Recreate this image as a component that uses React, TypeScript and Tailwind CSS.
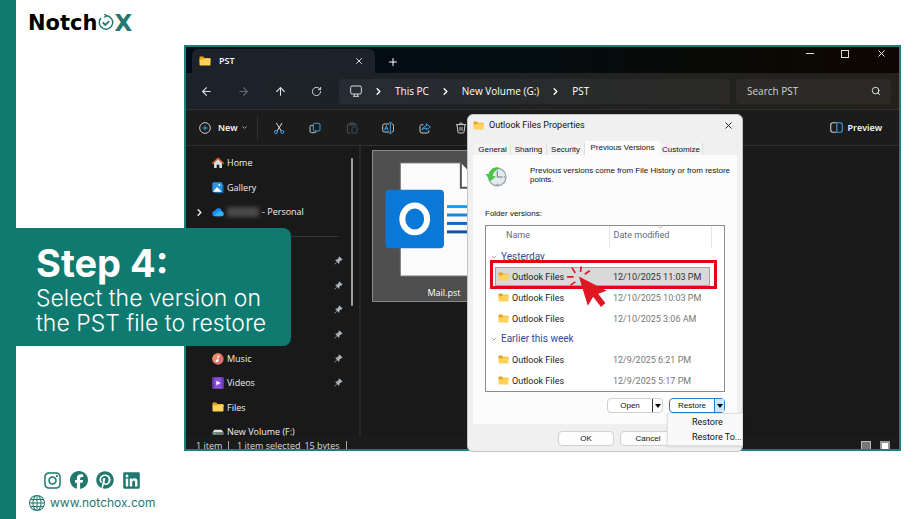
import type { ReactNode } from "react";
import { ArrowLeft, ArrowRight, ArrowUp, ChevronDown, ChevronRight, Plus, RotateCw, Search, X } from "lucide-react";
import { FaFacebook, FaInstagram, FaLinkedin, FaPinterest } from "react-icons/fa6";
import { BsGlobe } from "react-icons/bs";

function Folder({ className }: { className: string }) {
  return (
    <svg viewBox="0 0 24 20" className={className} aria-hidden="true">
      <path d="M1 2.5Q1 1 2.5 1H8.5L11 4H21.5Q23 4 23 5.5V10H1Z" fill="#e9a21b" />
      <path d="M1 7H9L11.5 5H21.5Q23 5 23 6.5V17.5Q23 19 21.5 19H2.5Q1 19 1 17.5Z" fill="#ffd25a" />
    </svg>
  );
}

function Pin() {
  return (
    <svg viewBox="0 0 20 20" className="size-[9px] shrink-0" aria-hidden="true">
      <path d="M12 1L19 8L17 10L15.500 9.500L12 13Q12.500 16 11 17.500L7 13.500L2 19L1 18L6.500 13L2.500 9Q4 7.500 7 8L10.500 4.500L10 3Z" fill="#aab4bb" />
    </svg>
  );
}

function Logo() {
  return (
    <div className="flex items-center font-['DejaVu_Sans'] text-[21px] leading-6 font-bold text-black">
      <span>Notch</span>
      <svg viewBox="0 0 44 48" className="ml-px h-[17px] w-4" fill="none" stroke="#23786f" strokeWidth="4" aria-hidden="true">
        <path d="M20 5A19 19 0 1 1 8 11" />
        <path d="M3 19L5 15M17 0L23 5L17 10" />
        <path d="M13 24L20 31L31 20" strokeWidth="5" />
      </svg>
      <span className="text-[23px] text-[#23786f]">X</span>
    </div>
  );
}

function Monitor() {
  return (
    <svg viewBox="0 0 36 36" className="size-3" fill="none" stroke="#d8d8d8" strokeWidth="3" aria-hidden="true">
      <rect x="2" y="3" width="32" height="24" rx="4" />
      <path d="M13 27V33M23 27V33M9 34H27" />
    </svg>
  );
}

const toolIcons: { name: string; drawing: ReactNode }[] = [
  {
    name: "Cut",
    drawing: (
      <>
        <path d="M10 3L25 27M27 3L12 27" stroke="#dcdcdc" />
        <circle cx="9" cy="30" r="4.500" stroke="#3ba4e6" />
        <circle cx="28" cy="30" r="4.500" stroke="#3ba4e6" />
      </>
    ),
  },
  {
    name: "Copy",
    drawing: (
      <>
        <path d="M12 10H7Q3 10 3 14V27Q3 32 8 32H17Q21 32 21 28" stroke="#c8c8c8" />
        <rect x="13" y="4" width="20" height="23" rx="4" stroke="#3ba4e6" />
      </>
    ),
  },
  {
    name: "Paste",
    drawing: (
      <>
        <path d="M13 33H8Q4 33 4 29V9Q4 6 8 6H12M24 6H27Q31 6 31 10V12M12 3H24V9H12Z" stroke="#555" />
        <rect x="18" y="15" width="15" height="18" rx="3" stroke="#28506a" />
      </>
    ),
  },
  {
    name: "Rename",
    drawing: (
      <>
        <path d="M21 6H7Q2 6 2 11V25Q2 30 7 30H21M29 6Q35 6 35 11V25Q35 30 29 30" stroke="#c8c8c8" />
        <path d="M8 25L13 11L18 25M10 20H16M25 3V33M21 2H29M21 34H29" stroke="#3ba4e6" />
      </>
    ),
  },
  {
    name: "Share",
    drawing: (
      <>
        <path d="M13 8H9Q3 8 3 14V27Q3 33 9 33H24Q30 33 30 27V25" stroke="#c8c8c8" />
        <path d="M9 24Q11 13 22 12V5L34 15L22 24V18Q14 18 9 24Z" stroke="#3ba4e6" />
      </>
    ),
  },
  {
    name: "Delete",
    drawing: <path d="M3 8H33M13 8Q13 3 18 3Q23 3 23 8M6 9L9 30Q9 33 13 33H23Q27 33 27 30L30 9M15 15V26M21 15V26" stroke="#d0d0d0" />,
  },
];

const sidebarIcons = {
  home: (
    <>
      <path d="M6 17L18 6L30 17V31Q30 33 28 33H22V23H14V33H8Q6 33 6 31Z" fill="#d9dde0" />
      <path d="M2 19L18 4L34 19" fill="none" stroke="#e8632b" strokeWidth="4" strokeLinejoin="round" strokeLinecap="round" />
    </>
  ),
  gallery: (
    <>
      <rect x="7" y="6" width="28" height="28" rx="4" fill="#0d5ba8" />
      <rect x="1" y="1" width="30" height="30" rx="4" fill="#2b93e0" />
      <path d="M3 29L15 15L29 29Z" fill="#fff" />
      <circle cx="22" cy="9" r="3" fill="#fff" />
    </>
  ),
  cloud: (
    <>
      <path d="M10 31Q1 31 1 23Q1 15 9 14Q13 5 22 7Q29 9 29 16Q35 18 35 24Q35 31 28 31Z" fill="#1a8cf0" />
      <path d="M10 31Q4 29 14 22Q22 15 29 16Q35 18 35 24Q35 31 28 31Z" fill="#35b4fb" />
    </>
  ),
  music: (
    <>
      <circle cx="18" cy="18" r="17" fill="#dc6f6b" />
      <path d="M1 18A17 17 0 0 1 30 6Q16 8 6 30Q1 25 1 18Z" fill="#ee8a62" />
      <circle cx="15" cy="23" r="4.500" fill="#fff" />
      <path d="M18 23V9L24 12" fill="none" stroke="#fff" strokeWidth="3" />
    </>
  ),
  videos: (
    <>
      <rect x="1" y="1" width="34" height="34" rx="3" fill="#8b4fe0" />
      <path d="M5 4V33M31 4V33" stroke="#3c1b78" strokeWidth="4" strokeDasharray="3 3" />
      <path d="M13 11L26 18L13 25Z" fill="#fff" />
    </>
  ),
  drive: (
    <>
      <path d="M7 11H29L35 20H1Z" fill="#dfe3e3" />
      <rect x="1" y="19" width="34" height="8" rx="2" fill="#6b7472" />
      <path d="M5 23H12" stroke="#3fd07a" strokeWidth="3" />
    </>
  ),
};

function SideIcon({ kind }: { kind: keyof typeof sidebarIcons }) {
  return (
    <svg viewBox="0 0 36 36" className="size-3 shrink-0" aria-hidden="true">
      {sidebarIcons[kind]}
    </svg>
  );
}

function SideRow({ icon, label, pinned }: { icon?: ReactNode; label?: string; pinned?: boolean }) {
  return (
    <li className="flex items-center gap-[3px] pr-2 pl-[26px]">
      {icon}
      <span className="flex-1">{label}</span>
      {pinned && <Pin />}
    </li>
  );
}

function Sidebar() {
  return (
    <nav aria-label="Folders" className="flex w-[175px] shrink-0 border-r-2 border-[#272727]">
      <ul className="mt-[5px] grid h-[293px] flex-1 grid-rows-12 text-[9px] text-[#f0f0f0]">
        <SideRow icon={<SideIcon kind="home" />} label="Home" />
        <SideRow icon={<SideIcon kind="gallery" />} label="Gallery" />
        <li className="flex items-center gap-[3px] pl-2">
          <ChevronRight className="mr-1 size-[11px]" strokeWidth={3} />
          <SideIcon kind="cloud" />
          <span className="h-[10px] w-8 bg-[#4a4a4a] blur-[2px]" />
          <span>- Personal</span>
        </li>
        <li className="flex items-center pr-3 pl-2">
          <span className="h-px flex-1 bg-[#333]" />
        </li>
        <SideRow pinned />
        <SideRow pinned />
        <SideRow pinned />
        <SideRow pinned />
        <SideRow icon={<SideIcon kind="music" />} label="Music" pinned />
        <SideRow icon={<SideIcon kind="videos" />} label="Videos" pinned />
        <SideRow icon={<Folder className="h-[10px] w-3" />} label="Files" />
        <SideRow icon={<SideIcon kind="drive" />} label="New Volume (F:)" />
      </ul>
      <span className="mt-3 mr-[6px] h-[148px] w-[2px] rounded-full bg-[#a0a0a0]" />
    </nav>
  );
}

function MailFile() {
  return (
    <figure className="mt-1 ml-[11px] flex h-[152px] w-36 flex-col items-center border border-[#8a8a8a] bg-[#4f4f4f]">
      <svg viewBox="0 0 144 130" className="h-[130px] w-36" aria-hidden="true">
        <path d="M28 12H89L111 34V126H28Z" fill="#fbfbfb" stroke="#777" />
        <path d="M89 12V37H111" fill="#fff" stroke="#555" strokeWidth="2" />
        <path d="M75 56H104" stroke="#1b9ff0" strokeWidth="3" />
        <path d="M75 64.500H104" stroke="#1787dc" strokeWidth="3" />
        <path d="M75 73H104" stroke="#1468c0" strokeWidth="3" />
        <path d="M75 81.500H104" stroke="#1054a4" strokeWidth="3" />
        <rect x="13" y="39" width="59" height="59" rx="4" fill="#0a78d6" />
        <ellipse cx="42.500" cy="68.500" rx="12.500" ry="13.500" fill="none" stroke="#fff" strokeWidth="6" />
      </svg>
      <figcaption className="pt-[5px] text-[9px] leading-4 text-white">Mail.pst</figcaption>
    </figure>
  );
}

function Explorer() {
  return (
    <div className="overflow-hidden border-2 border-[#1f7f78] bg-[#191919] font-['Open_Sans','Noto_Sans',sans-serif] text-white">
      <div className="flex h-[26px] items-start bg-linear-to-r from-[#030b1b] via-[#040d10] to-[#0e0600] pl-[6px]">
        <div className="mt-[2px] flex h-6 w-[183px] items-center rounded-t-md bg-[#1b222a] pr-[11px] pl-[7px]">
          <Folder className="h-[10px] w-3" />
          <span className="flex-1 pl-2 text-[9px] font-semibold">PST</span>
          <button aria-label="Close tab">
            <X className="size-[10px]" />
          </button>
        </div>
        <button aria-label="New tab" className="mt-[9px] ml-3">
          <Plus className="size-3" />
        </button>
        <div className="mt-px flex flex-1 items-center justify-end gap-[27px] pr-3">
          <button aria-label="Minimize" className="h-px w-2 bg-[#ddd]" />
          <button aria-label="Maximize" className="size-2 border border-[#ddd]" />
          <button aria-label="Close">
            <X className="size-[11px]" />
          </button>
        </div>
      </div>

      <div className="flex h-[37px] items-center border-b border-[#303030] bg-linear-to-r from-[#1b222a] to-[#24211b] pr-[8px] pl-[14px] text-[10px]">
        <div className="flex w-[139px] gap-6 text-[#e0e0e0]">
          <button aria-label="Back"><ArrowLeft className="size-[13px]" /></button>
          <button aria-label="Forward" className="text-[#666b70]"><ArrowRight className="size-[13px]" /></button>
          <button aria-label="Up"><ArrowUp className="size-[13px]" /></button>
          <button aria-label="Refresh"><RotateCw className="size-[11px]" /></button>
        </div>
        <div className="flex h-[25px] flex-1 items-center rounded bg-linear-to-r from-[#262c33] to-[#2b2a27] pl-[11px]">
          <Monitor />
          <ChevronRight className="mx-[11px] size-[11px]" strokeWidth={3} />
          <span>This PC</span>
          <ChevronRight className="mx-[11px] size-[11px]" strokeWidth={3} />
          <span>New Volume (G:)</span>
          <ChevronRight className="mx-[11px] size-[11px]" strokeWidth={3} />
          <span>PST</span>
        </div>
        <label className="ml-[6px] flex h-[25px] w-[155px] items-center rounded bg-[#2b2a26] pr-[10px] pl-[11px]">
          <input aria-label="Search" placeholder="Search PST" className="min-w-0 flex-1 outline-none placeholder:text-[#d4d4d4]" />
          <Search className="size-[10px]" strokeWidth={2} />
        </label>
      </div>

      <div className="flex h-9 items-center border-b border-[#2f2f2f] bg-[#1c1c1c] pr-[17px] pl-[13px] text-[9px] font-semibold">
        <button className="flex w-[60px] items-center">
          <svg viewBox="0 0 36 36" className="size-3" fill="none" strokeWidth="3" aria-hidden="true">
            <circle cx="18" cy="18" r="16" stroke="#ccc" />
            <path d="M10 18H26M18 10V26" stroke="#3ba4e6" />
          </svg>
          <span className="flex-1 pl-[7px] text-left">New</span>
        </button>
        <ChevronDown className="-ml-[18px] size-[7px]" />
        <span className="ml-[9px] h-6 w-px bg-[#303030]" />
        <div className="ml-[15px] flex w-[194px] justify-between">
          {toolIcons.map((tool) => (
            <button key={tool.name} aria-label={tool.name}>
              <svg viewBox="0 0 36 36" className="size-3" fill="none" strokeWidth="3" strokeLinejoin="round">
                {tool.drawing}
              </svg>
            </button>
          ))}
        </div>
        <button className="ml-auto flex items-center gap-[5px]">
          <svg viewBox="0 0 36 30" className="h-[11px] w-[13px]" fill="none" strokeWidth="3" aria-hidden="true">
            <path d="M18 2H8Q2 2 2 8V22Q2 28 8 28H18" stroke="#ccc" />
            <path d="M19 2H28Q34 2 34 8V22Q34 28 28 28H19Z" stroke="#3ba4e6" />
          </svg>
          Preview
        </button>
      </div>

      <div className="flex h-[291px] overflow-hidden">
        <Sidebar />
        <MailFile />
      </div>

      <div className="flex h-3 items-start overflow-hidden bg-[#1b1b1b] pr-[9px] pl-[10px] text-[9px] leading-[18px] text-[#dadada]">
        <span className="w-8">1 item</span>
        <span className="mt-1 h-3 w-px bg-[#aaa]" />
        <span className="ml-2">1 item selected</span>
        <span className="ml-1">15 bytes</span>
        <span className="mt-1 mr-auto ml-[6px] h-3 w-px bg-[#aaa]" />
        <button aria-label="Details view" className="mt-1 size-[10px] border border-[#bbb] bg-[#777]" />
        <button aria-label="Icon view" className="mt-1 ml-[9px] size-[10px] border-2 border-[#999] bg-white" />
      </div>
    </div>
  );
}

function Group({ title, tall }: { title: string; tall?: boolean }) {
  return (
    <tr className={tall ? "h-5" : "h-[18px]"}>
      <th colSpan={3} className="p-0 text-left text-[10px] leading-[18px] font-normal text-[#36479b]">
        <span className="flex items-center pl-1">
          <ChevronDown className="mr-[3px] size-2 text-[#777]" />
          {title}
        </span>
      </th>
    </tr>
  );
}

function Version({ date, selected }: { date: string; selected?: boolean }) {
  return (
    <tr className="relative h-[21px]">
      <td className="p-0">
        {selected && (
          <>
            <span className="absolute inset-y-px right-[14px] left-[9px] border border-[#a3a3a3] bg-[#d9d9d9]" />
            <span className="absolute -top-[6px] right-[7px] -bottom-[2px] left-1 border-3 border-[#e30613]" />
          </>
        )}
        <span className="relative flex items-center gap-[3px] pl-3 text-[#222]">
          <Folder className="h-[9px] w-[11px]" />
          Outlook Files
        </span>
      </td>
      <td className={selected ? "relative p-0 pl-1 text-[#333]" : "p-0 pl-1 text-[#777]"}>{date}</td>
      <td className="p-0" />
    </tr>
  );
}

function PreviousVersions() {
  return (
    <div className="h-[167px] border border-[#8c8c8c] bg-white">
      <table className="w-full table-fixed border-collapse text-[9px] leading-[14px]">
        <thead>
          <tr className="h-[22px] text-left text-[#5a6b8c]">
            <th className="w-[123px] p-0 pb-1 pl-5 font-normal">Name</th>
            <th className="relative w-[102px] border-x border-[#e6e6e6] p-0 pb-1 pl-1 font-normal">
              <ChevronDown className="absolute -top-[2px] left-[47px] size-[7px] text-[#888]" />
              Date modified
            </th>
            <th className="p-0" />
          </tr>
        </thead>
        <tbody>
          <Group title="Yesterday" />
          <Version date="12/10/2025 11:03 PM" selected />
          <Version date="12/10/2025 10:03 PM" />
          <Version date="12/10/2025 3:06 AM" />
          <Group title="Earlier this week" tall />
          <Version date="12/9/2025 6:21 PM" />
          <Version date="12/9/2025 5:17 PM" />
        </tbody>
      </table>
    </div>
  );
}

function SplitButton({ label, active }: { label: string; active?: boolean }) {
  return (
    <div className={active ? "flex h-[15px] w-14 rounded-sm border border-[#2f7cc4] bg-white" : "flex h-[15px] w-14 rounded-sm border border-[#cfcfcf] bg-white"}>
      <button className="flex-1">{label}</button>
      <button
        aria-label={label + " options"}
        className={active ? "flex w-[10px] items-center justify-center border-l border-[#2f7cc4] bg-[#cfe6f8]" : "flex w-[10px] items-center justify-center border-l border-[#333]"}
      >
        <svg viewBox="0 0 6 4" className="h-1 w-[6px]" aria-hidden="true">
          <path d="M0 0H6L3 4Z" fill="#000" />
        </svg>
      </button>
    </div>
  );
}

function ClickCursor() {
  return (
    <svg viewBox="315 315 130 130" className="absolute top-[150px] left-[97px] size-[43px]" aria-hidden="true">
      <path d="M357 350L441 393L415 402L437 430L424 442L400 411L384 438Z" fill="#e01620" />
      <path d="M321 351H341M332 376L346 366M336 323L346 339M364 319L362 336M390 332L375 343" stroke="#e01620" strokeWidth="5" />
    </svg>
  );
}

function PropertiesDialog() {
  const tab = "h-3 border-r border-[#dedede] bg-[#f3f3f3] pt-px text-center";
  return (
    <div
      role="dialog"
      aria-label="Outlook Files Properties"
      className="absolute top-[69px] left-[283px] h-[338px] w-[276px] rounded-md border border-[#c4c4c4] bg-[#f0f0f0] px-[5px] font-['Roboto','Noto_Sans',sans-serif] text-[9px] leading-3 text-[#111]"
    >
      <div className="flex h-[26px] items-center pr-[3px] pb-[6px]">
        <Folder className="h-[9px] w-[11px]" />
        <span className="flex-1 pl-[5px]">Outlook Files Properties</span>
        <button aria-label="Close dialog">
          <X className="size-[11px]" />
        </button>
      </div>

      <div role="tablist" className="flex h-[14px] items-end pl-[2px] font-['Liberation_Sans',sans-serif] text-[8px]">
        <button role="tab" className={tab + " w-9"}>General</button>
        <button role="tab" className={tab + " w-9"}>Sharing</button>
        <button role="tab" className={tab + " w-[38px]"}>Security</button>
        <button role="tab" aria-selected="true" className="h-[14px] w-[75px] bg-[#fcfcfc] pb-px">Previous Versions</button>
        <button role="tab" className={tab + " w-[43px]"}>Customize</button>
      </div>

      <div className="h-[269px] bg-[#fcfcfc] px-3 pt-[11px]">
        <div className="flex h-[42px] gap-[23px] font-['Liberation_Sans',sans-serif] text-[8px] leading-[9px] whitespace-nowrap">
          <svg viewBox="76 18 68 66" className="h-[22px] w-[22px] shrink-0" aria-hidden="true">
            <circle cx="114" cy="51" r="27" fill="#e3ebef" stroke="#9aa8af" strokeWidth="4" />
            <path d="M114 32V51H130M114 72V76M134 51H138" fill="none" stroke="#60727e" strokeWidth="3" />
            <path d="M123 24Q105 16 93 30Q88 35 88 42L78 42L92 64L110 50L100 47Q101 33 123 24Z" fill="#51c34a" />
          </svg>
          <p>
            Previous versions come from File History or from restore
            <br />
            points.
          </p>
        </div>
        <p className="h-[17px] font-['Liberation_Sans',sans-serif] text-[8px]">Folder versions:</p>
        <PreviousVersions />
        <div className="mt-[6px] flex justify-end gap-[6px] font-['Liberation_Sans',sans-serif] text-[8px]">
          <SplitButton label="Open" />
          <SplitButton label="Restore" active />
        </div>
      </div>

      <div className="mt-[7px] ml-[85px] flex gap-[6px] font-['Liberation_Sans',sans-serif] text-[8px]">
        <button className="h-[15px] w-14 rounded-sm border border-[#d0d0d0] bg-[#fdfdfd]">OK</button>
        <button className="h-[15px] w-14 rounded-sm border border-[#d0d0d0] bg-[#fdfdfd]">Cancel</button>
      </div>

      <div role="menu" className="absolute top-[298px] -right-px flex h-[33px] w-[76px] flex-col justify-center border border-[#e2e2e2] bg-[#f9f9f9] pl-6 leading-[15px] whitespace-nowrap shadow">
        <button role="menuitem" className="text-left">Restore</button>
        <button role="menuitem" className="text-left">Restore To...</button>
      </div>
      <ClickCursor />
    </div>
  );
}

export default function App() {
  return (
    <div className="flex min-h-screen bg-white">
      <div className="w-4 shrink-0 bg-[#0e7a70]" />
      <main className="relative flex flex-1 flex-col">
        <header className="flex h-[45px] items-center pl-3">
          <Logo />
        </header>

        <section className="relative mr-[21px] ml-[168px]">
          <Explorer />
          <PropertiesDialog />
        </section>

        <div className="absolute top-[228px] left-0 h-[118px] w-[275px] rounded-r-lg bg-[#0e7a70] pt-[14px] pl-5 font-['Inter',sans-serif] text-white">
          <h1 className="text-[38px] leading-[42px] font-bold">Step 4:</h1>
          <p className="pt-[2px] text-[23px] leading-[25px] font-light">
            Select the version on
            <br />
            the PST file to restore
          </p>
        </div>

        <footer className="pt-5 pl-[13px] text-[#1f776e]">
          <div className="flex gap-2 pl-[14px]">
            <a href="#instagram" aria-label="Instagram"><FaInstagram className="size-[19px]" /></a>
            <a href="#facebook" aria-label="Facebook"><FaFacebook className="size-[18px]" /></a>
            <a href="#pinterest" aria-label="Pinterest"><FaPinterest className="size-[18px]" /></a>
            <a href="#linkedin" aria-label="LinkedIn"><FaLinkedin className="size-[19px]" /></a>
          </div>
          <a href="#site" className="mt-1 flex items-center gap-[5px] font-['Inter',sans-serif] text-[12px] leading-[18px]">
            <BsGlobe className="size-4" />
            www.notchox.com
          </a>
        </footer>
      </main>
    </div>
  );
}
